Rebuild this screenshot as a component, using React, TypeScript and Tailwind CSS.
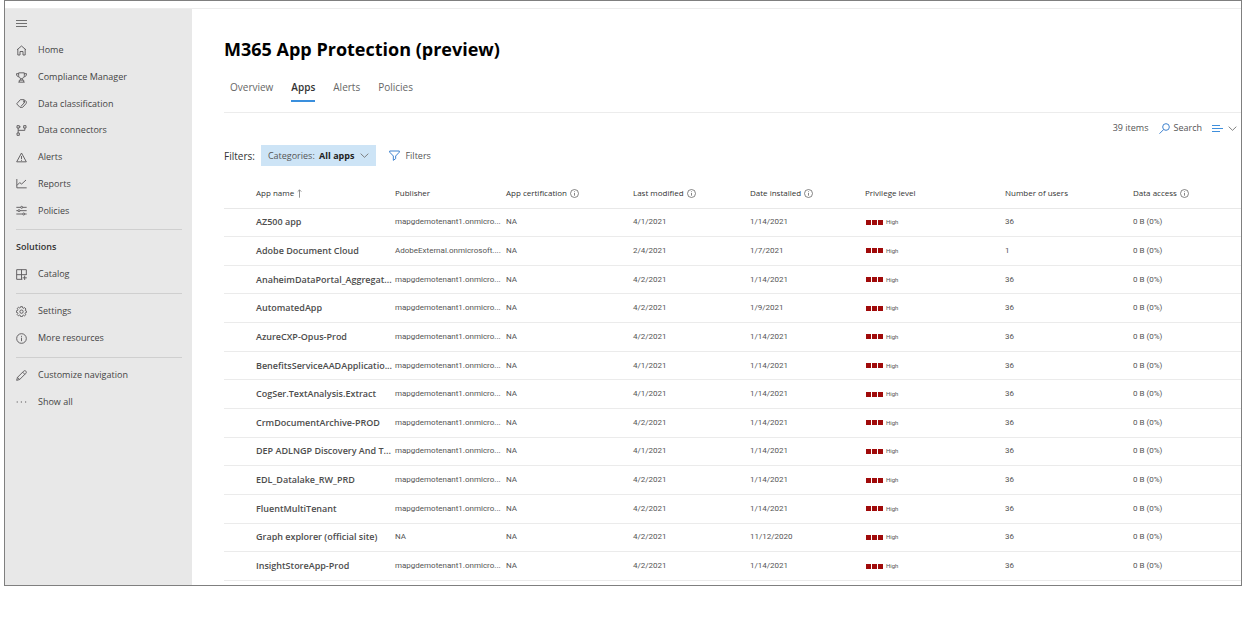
import React from "react";

type IconProps = { className?: string; children: React.ReactNode };

function Glyph({ className = "h-[11px] w-[11px]", children }: IconProps) {
  return (
    <svg
      viewBox="0 0 33 33"
      className={`${className} shrink-0`}
      fill="none"
      stroke="currentColor"
      strokeWidth="2.8"
      aria-hidden="true"
    >
      {children}
    </svg>
  );
}

const icons = {
  home: (
    <Glyph>
      <path d="M3 14.5 16.5 3 30 14.5M5.5 12.5V30H12V19.5H21V30H27.5V12.5" />
    </Glyph>
  ),
  trophy: (
    <Glyph>
      <path d="M8 2.5H25V11C25 16 21 19.5 16.5 19.5S8 16 8 11ZM8 5H1.5C1.5 11 4 14 8.5 14.5M25 5H31.5C31.5 11 29 14 24.5 14.5M14 19.5V24M19 19.5V24M10 30V24.5H23V30M7 30.5H26" />
    </Glyph>
  ),
  tag: (
    <Glyph>
      <path d="M2 17.500 13 5H23L29 8.500C32 11 32 14 30 17L20 28H12ZM23 5 26 13 15 25" />
      <circle cx="24" cy="11.500" r="1.500" />
    </Glyph>
  ),
  connectors: (
    <Glyph>
      <path d="M3 2H10V9H3ZM23 2H30V9H23ZM3 24H10V31H3ZM6.500 9V24M10 5.500H14M26.500 9V16H6.500" />
    </Glyph>
  ),
  alert: (
    <Glyph>
      <path d="M16.500 3 31 29.500H2ZM16.500 12V21M16.500 23.500V26.500" />
    </Glyph>
  ),
  chart: (
    <Glyph>
      <path d="M2.500 3V29.500H32M3 22 11 14 17 18 30 6" />
    </Glyph>
  ),
  sliders: (
    <Glyph>
      <path d="M1 7H14M20 7H32M1 17H6M12 17H32M1 27H20M26 27H32" />
      <circle cx="17" cy="7" r="3" />
      <circle cx="9" cy="17" r="3" />
      <circle cx="23" cy="27" r="3" />
    </Glyph>
  ),
  catalog: (
    <Glyph>
      <path d="M31 18V2H2V31H19M2 17H31M16.500 2V31M26 20V33M19.500 26.500H32.500" />
    </Glyph>
  ),
  gear: (
    <Glyph>
      <path d="M13.600 2H19.400L20.300 6 22.500 7 26 4.800 30 9 27.700 12.300 28.500 14.500 32 15.500V19L28.300 20 27.300 22.500 29.500 26 25.700 29.500 22.300 27.500 20 28.500 19 32H14L13 28.300 10.700 27.300 7.300 29.500 3.500 25.700 5.700 22.300 4.800 20 1 19V14.500L4.700 13.500 5.700 11 3.500 7.500 7.300 4 10.700 6 12.800 5Z" />
      <circle cx="16.500" cy="17" r="5" />
    </Glyph>
  ),
  info: (
    <Glyph>
      <circle cx="16.500" cy="16.500" r="14.500" />
      <path d="M16.500 14V24.500M16.500 8.500V11.500" />
    </Glyph>
  ),
  pencil: (
    <Glyph>
      <path d="M2 31 4.500 22 23 3.500C25 1.500 27.500 1.500 29.500 3.500S31.500 8 29.500 10L11 28.500ZM20 6.500 26.500 13M4.500 22 11 28.500" />
    </Glyph>
  ),
  more: (
    <Glyph>
      <path d="M2 15H5.500M14.500 15H18M27 15H30.500" strokeWidth="3.500" />
    </Glyph>
  ),
};

type NavEntry = { label: string; icon: React.ReactNode };

const primaryNav: NavEntry[] = [
  { label: "Home", icon: icons.home },
  { label: "Compliance Manager", icon: icons.trophy },
  { label: "Data classification", icon: icons.tag },
  { label: "Data connectors", icon: icons.connectors },
  { label: "Alerts", icon: icons.alert },
  { label: "Reports", icon: icons.chart },
  { label: "Policies", icon: icons.sliders },
];

function NavItem({ label, icon }: NavEntry) {
  return (
    <li className="flex">
      <a href="#" className="flex min-h-[26px] flex-1 items-center gap-[11px] text-[#444]">
        <span className="text-[#5c5a5c]">{icon}</span>
        {label}
      </a>
    </li>
  );
}

function Divider() {
  return <hr className="mr-[10px] border-[#cfcfcf]" />;
}

function Sidebar() {
  return (
    <nav aria-label="Main" className="w-[187px] shrink-0 bg-[#e8e8e8] pl-[11px] text-[9px] leading-[12px]">
      <button type="button" aria-label="Toggle navigation" className="flex h-[28px] items-center text-[#666]">
        <Glyph>
          <path d="M0 7.500H33M0 16.500H33M0 25.500H33" />
        </Glyph>
      </button>
      <ul className="grid h-[187px] auto-rows-fr">
        {primaryNav.map((n) => (
          <NavItem key={n.label} {...n} />
        ))}
      </ul>
      <div className="pt-[5px]">
        <Divider />
        <h2 className="pt-[11px] pb-[8px] font-semibold text-[#333]">Solutions</h2>
        <ul className="pb-[6px]">
          <NavItem label="Catalog" icon={icons.catalog} />
        </ul>
        <Divider />
        <ul className="grid gap-px pt-[4px] pb-[6px]">
          <NavItem label="Settings" icon={icons.gear} />
          <NavItem label="More resources" icon={icons.info} />
        </ul>
        <Divider />
        <ul className="grid gap-px pt-[4px] pb-[6px]">
          <NavItem label="Customize navigation" icon={icons.pencil} />
          <NavItem label="Show all" icon={icons.more} />
        </ul>
      </div>
    </nav>
  );
}

function Chevron() {
  return (
    <svg viewBox="0 0 27 15" className="h-[5px] w-[9px] shrink-0" fill="none" stroke="#777" strokeWidth="2.800" aria-hidden="true">
      <path d="M2 2 13.500 13 25 2" />
    </svg>
  );
}

function InfoDot() {
  return (
    <svg viewBox="0 0 27 27" className="h-[9px] w-[9px] shrink-0" fill="none" stroke="#666" strokeWidth="2.400" aria-label="More information" role="img">
      <circle cx="13.500" cy="13.500" r="12" />
      <path d="M13.500 12V20M13.500 7V9.500" />
    </svg>
  );
}

const columns: { label: string; width: string; extra?: "sort" | "info" }[] = [
  { label: "App name", width: "w-[139px]", extra: "sort" },
  { label: "Publisher", width: "w-[111px]" },
  { label: "App certification", width: "w-[127px]", extra: "info" },
  { label: "Last modified", width: "w-[117px]", extra: "info" },
  { label: "Date installed", width: "w-[115px]", extra: "info" },
  { label: "Privilege level", width: "w-[140px]" },
  { label: "Number of users", width: "w-[128px]" },
  { label: "Data access", width: "", extra: "info" },
];

const TENANT = "mapgdemotenant1.onmicro...";

const rows: [string, string, string, string, number][] = [
  ["AZ500 app", TENANT, "4/1/2021", "1/14/2021", 36],
  ["Adobe Document Cloud", "AdobeExternal.onmicrosoft....", "2/4/2021", "1/7/2021", 1],
  ["AnaheimDataPortal_Aggregat...", TENANT, "4/2/2021", "1/14/2021", 36],
  ["AutomatedApp", TENANT, "4/2/2021", "1/9/2021", 36],
  ["AzureCXP-Opus-Prod", TENANT, "4/2/2021", "1/14/2021", 36],
  ["BenefitsServiceAADApplicatio...", TENANT, "4/1/2021", "1/14/2021", 36],
  ["CogSer.TextAnalysis.Extract", TENANT, "4/1/2021", "1/14/2021", 36],
  ["CrmDocumentArchive-PROD", TENANT, "4/2/2021", "1/14/2021", 36],
  ["DEP ADLNGP Discovery And T...", TENANT, "4/1/2021", "1/14/2021", 36],
  ["EDL_Datalake_RW_PRD", TENANT, "4/2/2021", "1/14/2021", 36],
  ["FluentMultiTenant", TENANT, "4/2/2021", "1/14/2021", 36],
  ["Graph explorer (official site)", "NA", "4/2/2021", "11/12/2020", 36],
  ["InsightStoreApp-Prod", TENANT, "4/2/2021", "1/14/2021", 36],
];

function AppsTable() {
  return (
    <table className="h-[402px] w-full table-fixed border-collapse text-left text-[8px] leading-[12px] whitespace-nowrap text-[#555]">
      <thead>
        <tr className="h-[29px] border-b border-[#e8e8e8] text-[#333]">
          <td className="w-[32px]" />
          {columns.map((c) => (
            <th key={c.label} scope="col" className={`${c.width} p-0 font-medium`}>
              <span className="flex items-center gap-[3px]">
                {c.label}
                {c.extra === "info" && <InfoDot />}
                {c.extra === "sort" && (
                  <svg viewBox="0 0 15 27" className="h-[9px] w-[5px]" fill="none" stroke="#777" strokeWidth="2.400" aria-hidden="true">
                    <path d="M7.500 26V3M2 8 7.500 2.500 13 8" />
                  </svg>
                )}
              </span>
            </th>
          ))}
        </tr>
      </thead>
      <tbody className="font-[Roboto,'Open_Sans',sans-serif]">
        {rows.map(([name, publisher, modified, installed, users]) => (
          <tr key={name} className="border-b border-[#ebebeb]">
            <td />
            <th scope="row" className="p-0 font-['Open_Sans','Noto_Sans',sans-serif] text-[9px] font-semibold text-[#4d4d4d]">{name}</th>
            <td className="p-0">{publisher}</td>
            <td className="p-0">NA</td>
            <td className="p-0">{modified}</td>
            <td className="p-0">{installed}</td>
            <td className="p-0">
              <span className="flex items-center gap-[3px] pl-px text-[6px]">
                <span className="flex gap-px" aria-hidden="true">
                  <i className="h-[5px] w-[5px] bg-[#a00a0a]" />
                  <i className="h-[5px] w-[5px] bg-[#a00a0a]" />
                  <i className="h-[5px] w-[5px] bg-[#a00a0a]" />
                </span>
                High
              </span>
            </td>
            <td className="p-0">{users}</td>
            <td className="p-0">0 B (0%)</td>
          </tr>
        ))}
      </tbody>
    </table>
  );
}

function Tabs() {
  return (
    <nav aria-label="Sections" className="flex gap-[18px] border-b border-[#ececec] pb-[10px] pl-[6px] text-[10px] leading-[14px] text-[#666]">
      <a href="#" className="pt-[8px] pb-[8px]">Overview</a>
      <a href="#" aria-current="page" className="border-b-2 border-[#3a8fdd] pt-[8px] pb-[6px] font-semibold text-[#333]">Apps</a>
      <a href="#" className="pt-[8px] pb-[8px]">Alerts</a>
      <a href="#" className="pt-[8px] pb-[8px]">Policies</a>
    </nav>
  );
}

export default function App() {
  return (
    <div className="bg-white pl-[4px] font-['Open_Sans','Noto_Sans',sans-serif]">
      <div className="border border-[#7f7f7f]">
        <div className="mt-[7px] flex border-t border-[#ececec]">
          <Sidebar />
          <main className="min-w-0 flex-1 pb-[4px] pl-[32px]">
            <h1 className="pt-[27px] text-[18px] leading-[26px] font-bold text-black">M365 App Protection (preview)</h1>
            <div className="pt-[10px]">
              <Tabs />
            </div>
            <div className="flex items-center justify-end pt-[7px] pr-[4px] text-[9px] leading-[16px] text-[#555]">
              <span>39 items</span>
              <button type="button" className="ml-[10px] flex items-center gap-[4px]">
                <svg viewBox="0 0 33 33" className="h-[11px] w-[11px]" fill="none" stroke="#3f83cf" strokeWidth="3" aria-hidden="true">
                  <circle cx="21" cy="12" r="10" />
                  <path d="M14 19.500 1.500 32" />
                </svg>
                Search
              </button>
              <button type="button" aria-label="View options" className="ml-[10px] flex items-center gap-[5px]">
                <svg viewBox="0 0 33 24" className="h-[8px] w-[11px]" fill="none" stroke="#3f8fdc" strokeWidth="3" aria-hidden="true">
                  <path d="M0 4.500H24M0 13.500H33M0 22.500H24" />
                </svg>
                <Chevron />
              </button>
            </div>
            <div className="flex items-center pt-[9px] pb-[13px] text-[9px] leading-[12px] text-[#555]">
              <span className="text-[10px] text-[#333]">Filters:</span>
              <button type="button" className="ml-[6px] flex h-[21px] items-center gap-[6px] bg-[#cde4f6] px-[7px]">
                <span>
                  Categories: <b className="ml-[2px] text-[#222]">All apps</b>
                </span>
                <Chevron />
              </button>
              <button type="button" className="ml-[13px] flex items-center gap-[5px]">
                <svg viewBox="0 0 33 33" className="h-[11px] w-[11px]" fill="none" stroke="#3f83cf" strokeWidth="3" aria-hidden="true">
                  <path d="M2 3H31V6.500L20 18V26L13 31V18L2 6.500Z" />
                </svg>
                Filters
              </button>
            </div>
            <AppsTable />
          </main>
        </div>
      </div>
    </div>
  );
}
